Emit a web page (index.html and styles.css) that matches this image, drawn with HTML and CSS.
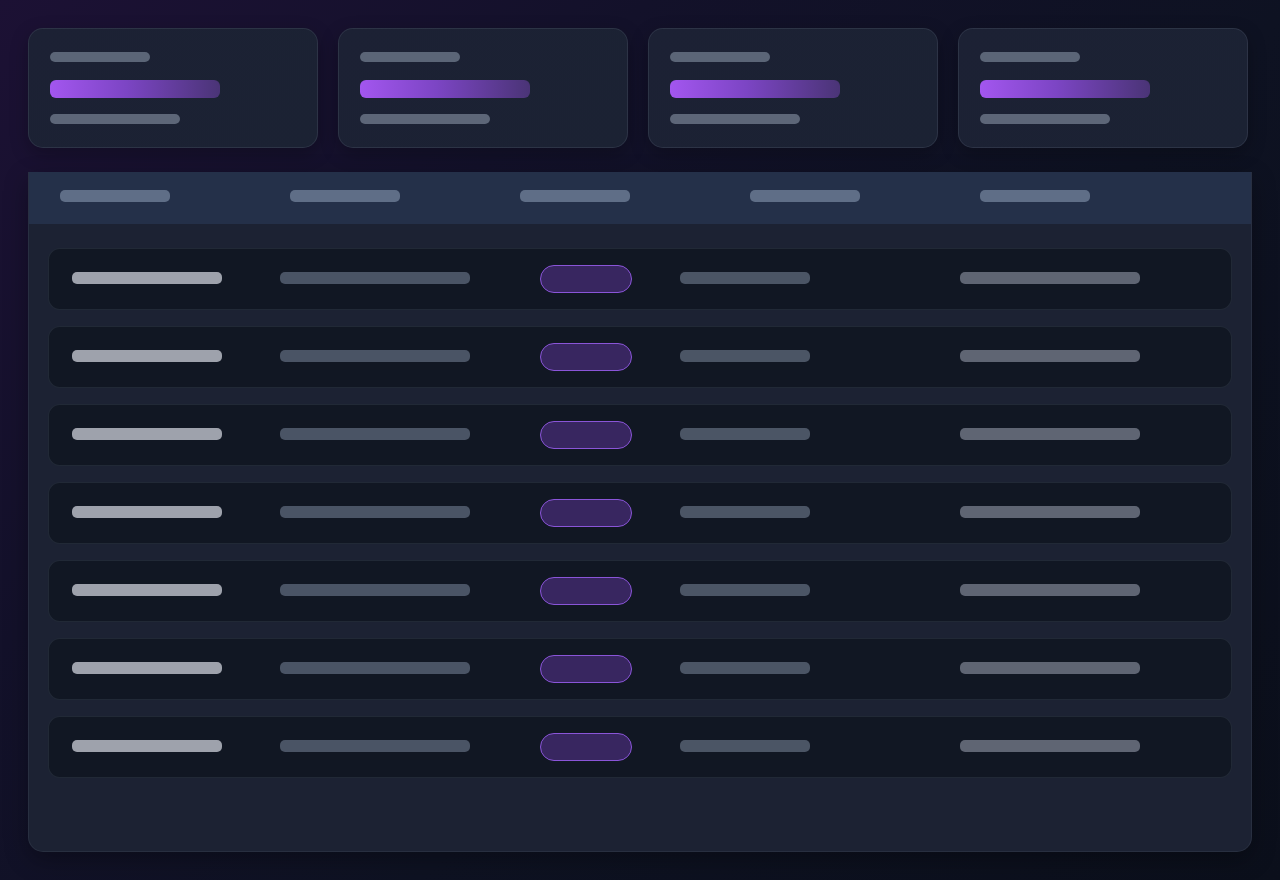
FILE: index.html
```html
<!DOCTYPE html>
<html lang="en">
<head>
<meta charset="utf-8">
<title>Dashboard skeleton</title>
<link rel="stylesheet" href="styles.css">
</head>
<body>
<main class="page">
  <section class="stats">
    <div class="stat-card"><div class="sk sk-label"></div><div class="sk sk-value"></div><div class="sk sk-sub"></div></div>
    <div class="stat-card"><div class="sk sk-label"></div><div class="sk sk-value"></div><div class="sk sk-sub"></div></div>
    <div class="stat-card"><div class="sk sk-label"></div><div class="sk sk-value"></div><div class="sk sk-sub"></div></div>
    <div class="stat-card"><div class="sk sk-label"></div><div class="sk sk-value"></div><div class="sk sk-sub"></div></div>
  </section>
  <section class="table">
    <div class="table-head">
      <div class="sk sk-th"></div><div class="sk sk-th"></div><div class="sk sk-th"></div><div class="sk sk-th"></div><div class="sk sk-th"></div>
    </div>
    <div class="table-body">
      <div class="row"><div class="sk c1"></div><div class="sk c2"></div><div class="pill"></div><div class="sk c4"></div><div class="sk c5"></div></div>
      <div class="row"><div class="sk c1"></div><div class="sk c2"></div><div class="pill"></div><div class="sk c4"></div><div class="sk c5"></div></div>
      <div class="row"><div class="sk c1"></div><div class="sk c2"></div><div class="pill"></div><div class="sk c4"></div><div class="sk c5"></div></div>
      <div class="row"><div class="sk c1"></div><div class="sk c2"></div><div class="pill"></div><div class="sk c4"></div><div class="sk c5"></div></div>
      <div class="row"><div class="sk c1"></div><div class="sk c2"></div><div class="pill"></div><div class="sk c4"></div><div class="sk c5"></div></div>
      <div class="row"><div class="sk c1"></div><div class="sk c2"></div><div class="pill"></div><div class="sk c4"></div><div class="sk c5"></div></div>
      <div class="row"><div class="sk c1"></div><div class="sk c2"></div><div class="pill"></div><div class="sk c4"></div><div class="sk c5"></div></div>
    </div>
  </section>
</main>
</body>
</html>
```
FILE: styles.css
```css
* { box-sizing: border-box; }
html, body { margin: 0; height: 100%; }
body {
  width: 1280px;
  height: 880px;
  overflow: hidden;
  font-family: "Inter", "Liberation Sans", sans-serif;
  background: linear-gradient(135deg, #1c1134 0%, #13112a 30%, #0e1222 60%, #0b0f1b 100%);
}
.page {
  padding: 28px;
  display: flex;
  flex-direction: column;
  gap: 24px;
}
.stats {
  display: grid;
  grid-template-columns: repeat(4, 290px);
  gap: 20px;
}
.stat-card {
  height: 120px;
  border-radius: 15px;
  background: linear-gradient(135deg, #1c2134 0%, #1b2233 100%);
  border: 1px solid rgba(148, 163, 184, 0.14);
  box-shadow: 0 6px 18px rgba(0, 0, 0, 0.25);
  padding: 23px 21px 0;
  display: flex;
  flex-direction: column;
}
.sk { border-radius: 5px; }
.sk-label { width: 100px; height: 10px; background: #5b6577; }
.sk-value {
  width: 170px; height: 18px; margin-top: 18px; border-radius: 6px;
  background: linear-gradient(90deg, #a356ef 0%, #7c45c4 45%, #4a3476 100%);
}
.sk-sub { width: 130px; height: 10px; margin-top: 16px; background: #5d6678; }

.table {
  width: 1224px;
  height: 680px;
  border-radius: 0 0 15px 15px;
  background: #1c2233;
  border: 1px solid rgba(148, 163, 184, 0.1);
  border-top: none;
  overflow: hidden;
  box-shadow: 0 8px 24px rgba(0, 0, 0, 0.3);
}
.table-head {
  height: 52px;
  background: #243049;
  display: flex;
  align-items: flex-start;
  gap: 120px;
  padding: 18px 0 0 32px;
  margin: 0 -1px;
}
.sk-th { width: 110px; height: 12px; background: #5f6e87; }
.table-body {
  padding: 24px 19px 0;
  display: flex;
  flex-direction: column;
  gap: 16px;
}
.row {
  height: 62px;
  border-radius: 12px;
  background: #111723;
  border: 1px solid rgba(148, 163, 184, 0.13);
  display: grid;
  grid-template-columns: 208px 260px 140px 280px 1fr;
  align-items: center;
  padding-left: 23px;
}
.c1, .c2, .c4, .c5 { height: 12px; margin-bottom: 2px; }
.c1 { width: 150px; background: #9ea2ac; }
.c2 { width: 190px; background: #4a5465; }
.c4 { width: 130px; background: #4b5565; }
.c5 { width: 180px; background: #5f6573; }
.pill {
  width: 92px; height: 28px;
  border-radius: 14px;
  background: #382660;
  border: 1px solid #8a55d8;
}
```
